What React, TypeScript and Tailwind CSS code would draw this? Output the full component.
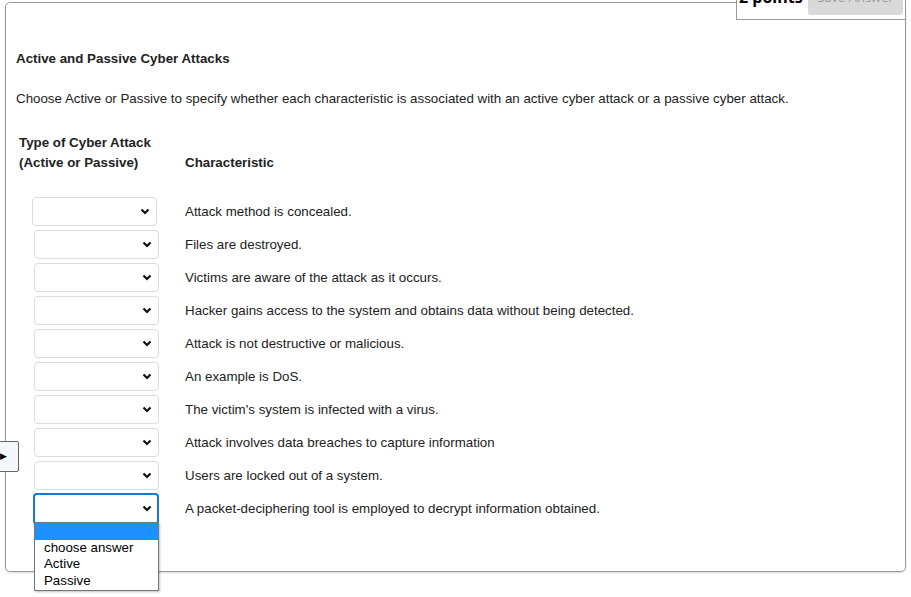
import React from "react";

const rows = [
  "Attack method is concealed.",
  "Files are destroyed.",
  "Victims are aware of the attack as it occurs.",
  "Hacker gains access to the system and obtains data without being detected.",
  "Attack is not destructive or malicious.",
  "An example is DoS.",
  "The victim's system is infected with a virus.",
  "Attack involves data breaches to capture information",
  "Users are locked out of a system.",
  "A packet-deciphering tool is employed to decrypt information obtained.",
];

const Chevron = () => (
  <svg width="10" height="7" viewBox="0 0 10 7">
    <polyline points="1.5,1.5 5,5 8.5,1.5" fill="none" stroke="#111" strokeWidth="2.2" />
  </svg>
);

const Select = ({ first, open }: { first?: boolean; open?: boolean }) => (
  <div className={first ? "ml-[13px] relative" : "ml-[15px] relative"}>
    <div
      className={
        open
          ? "flex items-center justify-end pr-[5px] w-[126px] h-[32px] -ml-[1px] rounded-[4px] border-2 border-[#1a78d4] bg-white"
          : "flex items-center justify-end pr-[6px] w-[125px] h-[29px] rounded-[4px] border border-[#dcdcdc] bg-white"
      }
    >
      <Chevron />
    </div>
    {open && (
      <div className="absolute left-0 top-[29px] w-[125px] border border-[#777] bg-white text-[13.3px] leading-[16.5px] text-black shadow-[1px_1px_2px_rgba(0,0,0,0.25)] z-10">
        <div className="h-[17px] bg-[#1e90ff]" />
        <div className="pl-[9px]">choose answer</div>
        <div className="pl-[9px]">Active</div>
        <div className="pl-[9px] pb-[1px]">Passive</div>
      </div>
    )}
  </div>
);

export default function App() {
  return (
    <div className="relative w-[911px] h-[597px] overflow-hidden bg-white font-['Liberation_Sans',Arial,sans-serif] text-[#222]">
      <div className="ml-[5px] mt-[2px] w-[901px] h-[570px] rounded-[5px] border border-[#9a9a9a] shadow-[0_1px_2px_rgba(0,0,0,0.15)] px-[10px]">
        <div className="mt-[48px] text-[13.33px] font-bold leading-[16px]">Active and Passive Cyber Attacks</div>
        <div className="mt-[24px] text-[13.33px] leading-[16px]">
          Choose Active or Passive to specify whether each characteristic is associated with an active cyber attack or a passive cyber attack.
        </div>
        <div className="ml-[3px] mt-[26px]">
          <div className="flex items-end text-[13.33px] font-bold leading-[20px]">
            <div className="w-[166px]">
              Type of Cyber Attack
              <br />
              (Active or Passive)
            </div>
            <div>Characteristic</div>
          </div>
          <div className="mt-[24px] flex flex-col gap-[4px]">
            {rows.map((r, i) => (
              <div key={i} className="flex items-center h-[29px]">
                <div className="w-[166px]">
                  <Select first={i === 0} open={i === rows.length - 1} />
                </div>
                <div className="text-[13.33px] leading-[16px]">{r}</div>
              </div>
            ))}
          </div>
        </div>
      </div>

      {/* points / save header, scrolled partly out of view */}
      <div className="absolute right-[5px] top-[-20px] w-[170px] h-[40px] border border-[#9a9a9a] bg-white flex items-start justify-between pl-[2px] pr-[2px] font-['Open_Sans',sans-serif]">
        <span className="mt-[8px] font-bold text-[16px] leading-[16px] text-black whitespace-nowrap">2 points</span>
        <span className="w-[95px] h-[34px] rounded-[3px] bg-[#d9d9d9] pt-[9px] text-center text-[#999] text-[13px] leading-[14px] whitespace-nowrap">
          Save Answer
        </span>
      </div>

      {/* left drawer tab */}
      <div className="absolute left-[-2px] top-[441px] w-[21px] h-[31px] border border-[#666] rounded-r-[2px] bg-[#f4f8fc] flex items-center">
        <span className="ml-[1px] text-[9px] leading-none text-black">▶</span>
      </div>
    </div>
  );
}
